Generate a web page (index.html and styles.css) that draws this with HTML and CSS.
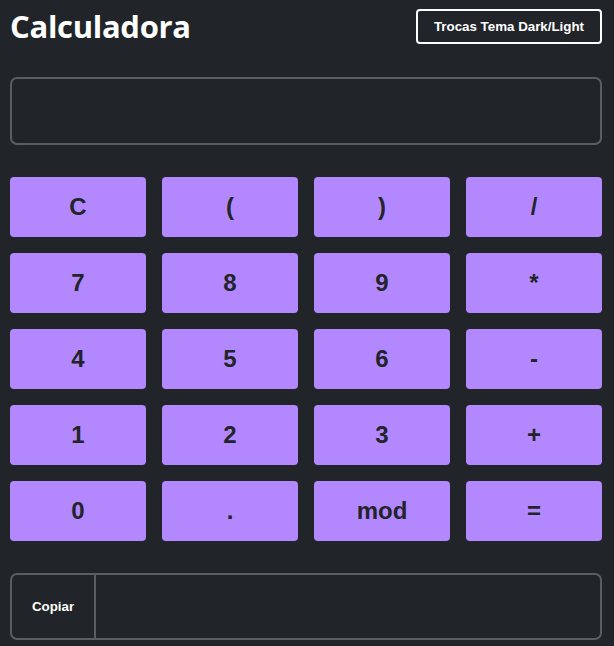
FILE: index.html
```html
<!DOCTYPE html>
<html lang="pt">
<head>
<meta charset="utf-8">
<title>Calculadora</title>
<link rel="stylesheet" href="styles.css">
</head>
<body>
<div class="app">
  <header class="top">
    <h1 class="title">Calculadora</h1>
    <button class="theme-btn">Trocas Tema Dark/Light</button>
  </header>
  <div class="display"></div>
  <div class="keys">
    <button class="key">C</button>
    <button class="key">(</button>
    <button class="key">)</button>
    <button class="key">/</button>
    <button class="key">7</button>
    <button class="key">8</button>
    <button class="key">9</button>
    <button class="key">*</button>
    <button class="key">4</button>
    <button class="key">5</button>
    <button class="key">6</button>
    <button class="key">-</button>
    <button class="key">1</button>
    <button class="key">2</button>
    <button class="key">3</button>
    <button class="key">+</button>
    <button class="key">0</button>
    <button class="key">.</button>
    <button class="key">mod</button>
    <button class="key">=</button>
  </div>
  <div class="copy-row">
    <button class="copy-btn">Copiar</button>
    <div class="copy-out"></div>
  </div>
</div>
</body>
</html>
```
FILE: styles.css
```css
html, body {
  margin: 0;
  padding: 0;
  background: #212429;
}
body {
  font-family: "Liberation Sans", Arial, sans-serif;
  color: #fff;
}
.app {
  width: 592px;
  padding: 9px 0 0 10px;
}
.top {
  display: flex;
  justify-content: space-between;
  align-items: flex-start;
  height: 68px;
}
.title {
  margin: 0;
  font-family: "Open Sans", sans-serif;
  font-weight: 700;
  font-size: 31px;
  line-height: 34px;
  color: #fff;
  letter-spacing: -0.3px;
}
.theme-btn {
  width: 186px;
  height: 35px;
  background: transparent;
  border: 2px solid #fff;
  border-radius: 4px;
  color: #fff;
  font-family: "Liberation Sans", Arial, sans-serif;
  font-weight: 700;
  font-size: 13.33px;
  padding: 0;
}
.display {
  height: 64px;
  border: 2px solid #5c5d60;
  border-radius: 7px;
  margin-bottom: 32px;
}
.keys {
  display: grid;
  grid-template-columns: repeat(4, 136px);
  grid-auto-rows: 60px;
  column-gap: 16px;
  row-gap: 16px;
  width: 592px;
}
.key {
  background: #b388ff;
  border: none;
  border-radius: 4px;
  color: #212429;
  font-family: "Liberation Sans", Arial, sans-serif;
  font-weight: 700;
  font-size: 24px;
  padding: 0;
}
.copy-row {
  margin-top: 32px;
  height: 63px;
  border: 2px solid #5c5d60;
  border-radius: 7px;
  display: flex;
  width: 588px;
}
.copy-btn {
  width: 84px;
  background: transparent;
  border: none;
  border-right: 2px solid #5c5d60;
  color: #fff;
  font-family: "Liberation Sans", Arial, sans-serif;
  font-weight: 700;
  font-size: 13.33px;
  padding: 0;
}
.copy-out {
  flex: 1;
}
```
